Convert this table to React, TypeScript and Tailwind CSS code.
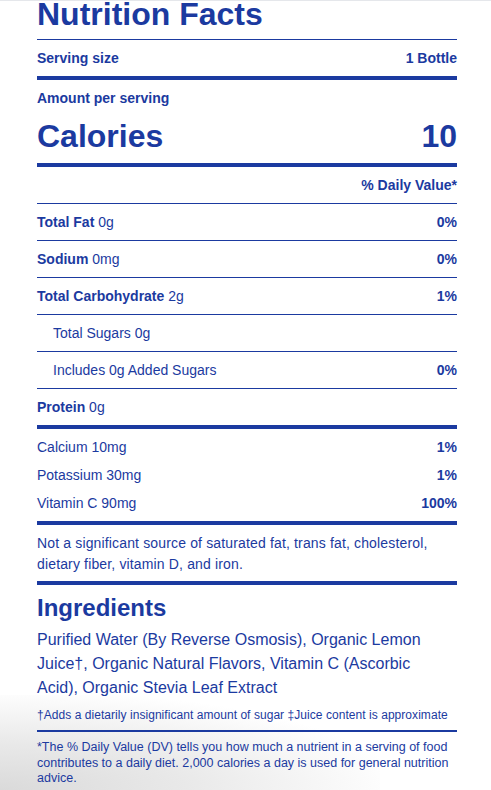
import React from "react";

const C = "text-[#1b3aa0]";

function Row({
  label,
  amount,
  dv,
  indent = false,
  boldLabel = true,
  border = true,
}: {
  label: string;
  amount: string;
  dv?: string;
  indent?: boolean;
  boldLabel?: boolean;
  border?: boolean;
}) {
  return (
    <div
      className={`flex h-[36px] items-center justify-between text-[14px] ${
        border ? "border-b border-[#1b3aa0] h-[37px]" : ""
      } ${indent ? "pl-4" : ""}`}
    >
      <span>
        {boldLabel ? <span className="font-bold">{label}</span> : label}
        {amount ? " " + amount : ""}
      </span>
      {dv ? <span className="font-bold">{dv}</span> : null}
    </div>
  );
}

function Vit({ label, dv }: { label: string; dv: string }) {
  return (
    <div className="flex h-[28px] items-center justify-between text-[14px]">
      <span>{label}</span>
      <span className="font-bold">{dv}</span>
    </div>
  );
}

export default function App() {
  return (
    <div
      className={`relative h-[790px] w-[491px] overflow-hidden bg-white border-t border-[#e5e7eb] ${C}`}
      style={{ fontFamily: '"Liberation Sans", Arial, sans-serif' }}
    >
      <div className="absolute bottom-0 left-0 z-0 h-[95px] w-[380px] bg-[radial-gradient(ellipse_at_bottom_left,#dadada_0%,#e9e9e9_35%,rgba(255,255,255,0)_75%)]" />
      <div className="relative z-10 ml-[37px] w-[420px]">
        <div className="h-[39px] border-b border-[#1b3aa0] pt-[1px]">
          <h1 className="text-[32px] font-bold leading-[24px]">Nutrition Facts</h1>
        </div>
        <div className="flex h-[36px] items-center justify-between text-[14px] font-bold">
          <span>Serving size</span>
          <span>1 Bottle</span>
        </div>
        <div className="h-[4px] bg-[#1b3aa0]" />
        <div className="flex h-[36px] items-center text-[14px] font-bold">Amount per serving</div>
        <div className="flex h-[39px] items-center justify-between text-[32px] font-bold">
          <span>Calories</span>
          <span>10</span>
        </div>
        <div className="mt-[8px] h-[4px] bg-[#1b3aa0]" />
        <div className="flex h-[37px] items-center justify-end border-b border-[#1b3aa0] text-[14px] font-bold">
          % Daily Value*
        </div>
        <Row label="Total Fat" amount="0g" dv="0%" />
        <Row label="Sodium" amount="0mg" dv="0%" />
        <Row label="Total Carbohydrate" amount="2g" dv="1%" />
        <Row label="Total Sugars 0g" amount="" indent boldLabel={false} />
        <Row label="Includes 0g Added Sugars" amount="" dv="0%" indent boldLabel={false} />
        <Row label="Protein" amount="0g" border={false} />
        <div className="h-[4px] bg-[#1b3aa0]" />
        <div className="py-[4px]">
          <Vit label="Calcium 10mg" dv="1%" />
          <Vit label="Potassium 30mg" dv="1%" />
          <Vit label="Vitamin C 90mg" dv="100%" />
        </div>
        <div className="h-[4px] bg-[#1b3aa0]" />
        <p className="pt-[8px] pb-[6px] text-[14px] leading-[21px] tracking-[0.15px]">
          Not a significant source of saturated fat, trans fat, cholesterol,
          <br />
          dietary fiber, vitamin D, and iron.
        </p>
        <div className="h-[4px] bg-[#1b3aa0]" />
        <h2 className="mt-[9px] text-[24px] font-bold leading-[28px]">Ingredients</h2>
        <p className="mt-[6px] text-[16px] leading-[24px]">
          Purified Water (By Reverse Osmosis), Organic Lemon
          <br />
          Juice†, Organic Natural Flavors, Vitamin C (Ascorbic
          <br />
          Acid), Organic Stevia Leaf Extract
        </p>
        <p className="mt-[7px] text-[12px] leading-[16px] tracking-[0.05px]">
          †Adds a dietarily insignificant amount of sugar ‡Juice content is approximate
        </p>
        <div className="mt-[7px] h-[2px] bg-[#1b3aa0]" />
        <p className="pt-[8px] text-[12.5px] leading-[15.5px]">
          *The % Daily Value (DV) tells you how much a nutrient in a serving of food
          <br />
          contributes to a daily diet. 2,000 calories a day is used for general nutrition
          <br />
          advice.
        </p>
      </div>
    </div>
  );
}
